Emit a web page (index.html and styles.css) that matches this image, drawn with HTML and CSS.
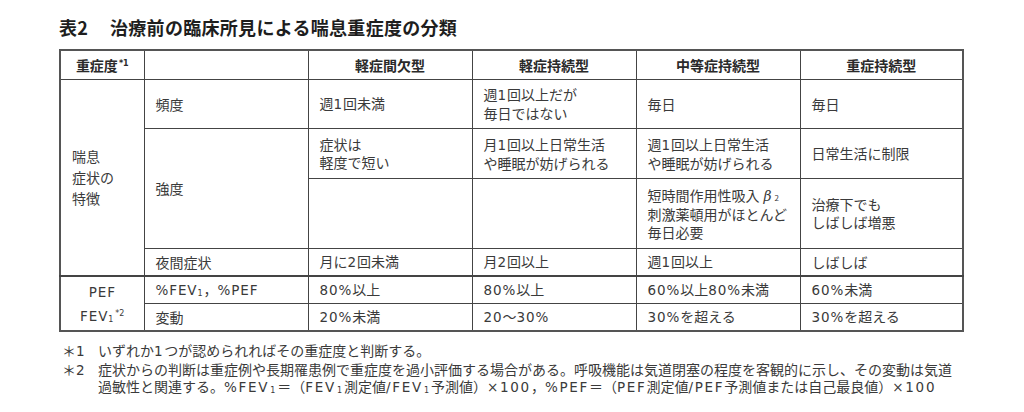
FILE: index.html
```html
<!DOCTYPE html>
<html lang="ja">
<head>
<meta charset="utf-8">
<title>表2 治療前の臨床所見による喘息重症度の分類</title>
<link rel="stylesheet" href="styles.css">
</head>
<body>
<div class="page">
  <h1 class="title"><span class="title-num">表2</span>治療前の臨床所見による喘息重症度の分類</h1>
  <table class="grid">
    <colgroup>
      <col class="c1"><col class="c2"><col class="c3"><col class="c3"><col class="c3"><col class="c6">
    </colgroup>
    <thead>
      <tr class="r-head">
        <th>重症度<sup class="note">*1</sup></th>
        <th></th>
        <th>軽症間欠型</th>
        <th>軽症持続型</th>
        <th>中等症持続型</th>
        <th>重症持続型</th>
      </tr>
    </thead>
    <tbody>
      <tr class="r-freq">
        <td rowspan="4" class="group">喘息<br>症状の<br>特徴</td>
        <td>頻度</td>
        <td>週<span class="l">1</span>回未満</td>
        <td>週<span class="l">1</span>回以上だが<br>毎日ではない</td>
        <td>毎日</td>
        <td>毎日</td>
      </tr>
      <tr class="r-int1">
        <td rowspan="2">強度</td>
        <td>症状は<br>軽度で短い</td>
        <td>月<span class="l">1</span>回以上日常生活<br>や睡眠が妨げられる</td>
        <td>週<span class="l">1</span>回以上日常生活<br>や睡眠が妨げられる</td>
        <td>日常生活に制限</td>
      </tr>
      <tr class="r-int2">
        <td></td>
        <td></td>
        <td>短時間作用性吸入<i class="beta">β</i><sub class="sub2">2</sub><br>刺激薬頓用がほとんど<br>毎日必要</td>
        <td>治療下でも<br>しばしば増悪</td>
      </tr>
      <tr class="r-night">
        <td>夜間症状</td>
        <td>月に<span class="l">2</span>回未満</td>
        <td>月<span class="l">2</span>回以上</td>
        <td>週<span class="l">1</span>回以上</td>
        <td>しばしば</td>
      </tr>
      <tr class="r-pef1 sep">
        <td rowspan="2" class="group center pef"><span class="l">PEF</span><br><span class="l">FEV</span><sub class="sub1">1</sub><sup class="note">*2</sup></td>
        <td><span class="l">%FEV</span><sub class="sub1">1</sub>，<span class="l">%PEF</span></td>
        <td><span class="l">80%</span>以上</td>
        <td><span class="l">80%</span>以上</td>
        <td><span class="l">60%</span>以上<span class="l">80%</span>未満</td>
        <td><span class="l">60%</span>未満</td>
      </tr>
      <tr class="r-pef2">
        <td>変動</td>
        <td><span class="l">20%</span>未満</td>
        <td><span class="l">20</span>～<span class="l">30%</span></td>
        <td><span class="l">30%</span>を超える</td>
        <td><span class="l">30%</span>を超える</td>
      </tr>
    </tbody>
  </table>
  <div class="notes">
    <div class="fn"><span class="fn-mark">＊<span class="l">1</span></span><p class="fn-text">いずれか<span class="l">1</span>つが認められればその重症度と判断する。</p></div>
    <div class="fn"><span class="fn-mark">＊<span class="l">2</span></span><p class="fn-text">症状からの判断は重症例や長期罹患例で重症度を過小評価する場合がある。呼吸機能は気道閉塞の程度を客観的に示し、その変動は気道過敏性と関連する。<span class="l">%FEV</span><sub class="sub1">1</sub>＝（<span class="l">FEV</span><sub class="sub1">1</sub>測定値<span class="l">/FEV</span><sub class="sub1">1</sub>予測値）<span class="l">×100</span>，<span class="l">%PEF</span>＝（<span class="l">PEF</span>測定値<span class="l">/PEF</span>予測値または自己最良値）<span class="l">×100</span></p></div>
  </div>
</div>
</body>
</html>
```
FILE: styles.css
```css
html, body {
  margin: 0;
  padding: 0;
  background: #ffffff;
}
body {
  font-family: "Noto Sans CJK JP", "Noto Sans", sans-serif;
  color: #3a3a3a;
}
.page {
  padding: 15px 0 0 59px;
}
.title {
  margin: 0;
  font-size: 18px;
  line-height: 24px;
  font-weight: 700;
  color: #1e1e1e;
  letter-spacing: 0.3px;
}
.title-num {
  display: inline-block;
  width: 51px;
}
.grid {
  margin-top: 10px;
  width: 903px;
  table-layout: fixed;
  border-collapse: collapse;
  border: 2px solid #555;
  font-size: 14px;
  line-height: 18px;
}
.c1 { width: 84px; }
.c2 { width: 164px; }
.c3 { width: 164px; }
.c6 { width: 163px; }
.grid th, .grid td {
  border: 1px solid #444;
  padding: 0 0 0 11px;
  vertical-align: middle;
  text-align: left;
}
.grid th {
  text-align: center;
  padding: 0;
  font-weight: 700;
  color: #2a2a2a;
}
.grid td.center { text-align: center; padding: 0; }
.group { line-height: 21px; }
.pef { line-height: 23px; }
.r-head { height: 29px; }
.r-freq { height: 49px; }
.r-int1 { height: 50px; }
.r-int2 { height: 70px; }
.r-night { height: 28px; }
.r-pef1 { height: 27px; }
.r-pef2 { height: 28px; }
.sep td { border-top: 2px solid #444; }
.l {
  font-family: "DejaVu Sans", "Noto Sans CJK JP", sans-serif;
  font-size: 13.5px;
  letter-spacing: 0.9px;
}
.note {
  font-family: "DejaVu Sans", sans-serif;
  font-size: 8px;
  vertical-align: 5px;
  line-height: 0;
  margin-left: 1px;
}
.sub1 {
  font-family: "DejaVu Sans", sans-serif;
  font-size: 8px;
  vertical-align: -1px;
  line-height: 0;
  margin-right: 1px;
}
.beta {
  font-family: "DejaVu Serif", serif;
  font-style: italic;
  margin-left: 4px;
}
.sub2 {
  font-size: 8px;
  vertical-align: 0;
  line-height: 0;
  margin-left: 3px;
}
.notes {
  margin-top: 10px;
  padding-left: 3px;
  font-size: 14px;
  line-height: 17.5px;
}
.fn {
  display: flex;
}
.fn-mark {
  flex: 0 0 36px;
}
.fn-text {
  margin: 0;
  width: 860px;
}
.fn-text .l {
  letter-spacing: 1.7px;
}
.fn-text .sub1 {
  margin-right: 2px;
  margin-left: 1px;
}
```
